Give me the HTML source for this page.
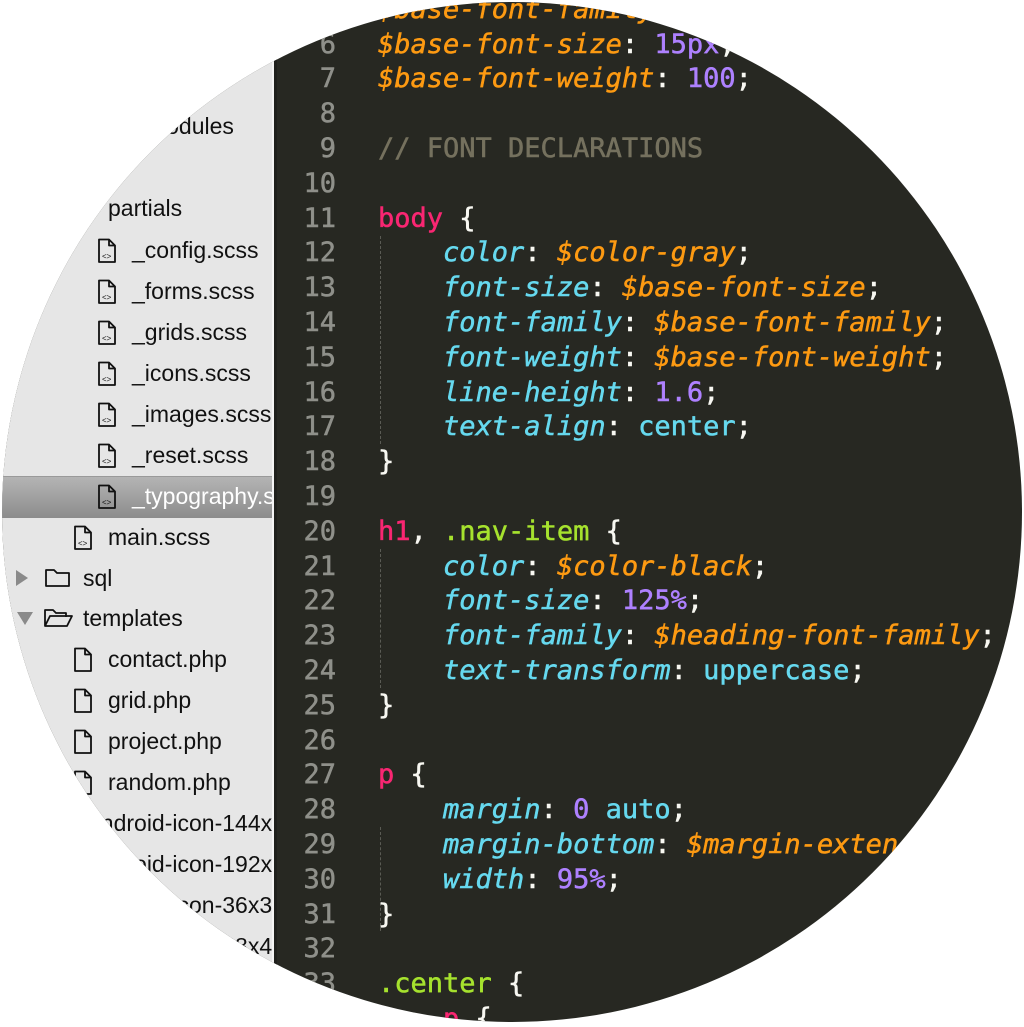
<!DOCTYPE html>
<html><head><meta charset="utf-8">
<style>
html,body{margin:0;padding:0;background:#fff;width:1024px;height:1027px;overflow:hidden}
#c{position:absolute;left:2px;top:2px;width:1020px;height:1020px;border-radius:50%;overflow:hidden;background:#272822}
#side{position:absolute;left:0;top:0;width:270px;height:1020px;background:#e6e6e6;overflow:hidden}
#div{position:absolute;left:270px;top:0;width:2px;height:1020px;background:#f4f4f4}
#div2{position:absolute;left:272px;top:0;width:3px;height:1020px;background:#1f201c}
.it{position:absolute;font-family:"Liberation Sans",sans-serif;font-size:23px;color:#111;white-space:nowrap;line-height:30px}
.sel{position:absolute;left:0;top:474px;width:270px;height:41px;background:linear-gradient(#b4b4b4,#8c8c8c);border-top:1px solid #9a9a9a}
.ic{position:absolute}
#code{position:absolute;left:0;top:-9.2px;font-family:"DejaVu Sans Mono","Liberation Mono",monospace;font-size:27px;line-height:34.8px;white-space:pre;-webkit-text-stroke:0.5px currentColor}
.ln{position:absolute;left:0;width:334px;text-align:right;color:#8f908a}
.tx{position:absolute;left:376px;color:#f8f8f2}
.o{color:#fd9a12;font-style:italic}.p{color:#ae81ff}.k{color:#f92672}.c{color:#66d9ef;font-style:italic}.cv{color:#66d9ef}.g{color:#a6e22e}.cm{color:#75715e}
.guide{position:absolute;left:378px;width:0;border-left:1px dashed #5a5b54;-webkit-text-stroke:0}
</style></head><body>
<div id="c">
<div id="side">
<div class="sel"></div>

<div class="it" style="left:81px;top:109px">node_modules</div>
<div class="it" style="left:106px;top:191px">partials</div>

<svg class="ic" width="30" height="360" style="left:93px;top:233px" viewBox="0 0 30 360">
<defs><g id="f"><path d="M3 1.5h10l6 6v16.5h-16z M13 1.5v6h6" fill="none" stroke="#111" stroke-width="1.8" stroke-linejoin="round"/><text x="6" y="21" font-size="8" font-family="Liberation Sans" fill="#111">&lt;&gt;</text></g></defs>
<use href="#f" x="1" y="3"/><use href="#f" x="1" y="44"/><use href="#f" x="1" y="85"/><use href="#f" x="1" y="126"/><use href="#f" x="1" y="167"/><use href="#f" x="1" y="208"/><use href="#f" x="1" y="249"/>
</svg>
<svg class="ic" width="30" height="30" style="left:69px;top:523px"><use href="#f" x="1" y="0"/></svg>

<div class="it" style="left:130px;top:233px">_config.scss</div>
<div class="it" style="left:130px;top:274px">_forms.scss</div>
<div class="it" style="left:130px;top:315px">_grids.scss</div>
<div class="it" style="left:130px;top:356px">_icons.scss</div>
<div class="it" style="left:130px;top:397px">_images.scss</div>
<div class="it" style="left:130px;top:438px">_reset.scss</div>
<div class="it" style="left:130px;top:479px;color:#fff">_typography.scss</div>
<div class="it" style="left:106px;top:520px">main.scss</div>

<svg class="ic" width="60" height="30" style="left:10px;top:562px"><path d="M4 6l12 8-12 8z" fill="#8a8a8a"/><path d="M34 6h8l3 3h12v13h-23z" fill="none" stroke="#111" stroke-width="1.8" stroke-linejoin="round"/></svg>
<div class="it" style="left:81px;top:561px">sql</div>
<svg class="ic" width="70" height="30" style="left:10px;top:602px"><path d="M5 8h16l-8 13z" fill="#8a8a8a"/><path d="M33 22v-16h8l3 3h10v4 M33 22l5-10h22l-5 10z" fill="none" stroke="#111" stroke-width="1.8" stroke-linejoin="round"/></svg>
<div class="it" style="left:81px;top:601px">templates</div>

<svg class="ic" width="30" height="170" style="left:69px;top:643px" viewBox="0 0 30 170">
<defs><path id="pf" d="M3 1.5h10l6 6v16.5h-16z M13 1.5v6h6" fill="none" stroke="#111" stroke-width="1.8" stroke-linejoin="round"/></defs>
<use href="#pf" x="1" y="2"/><use href="#pf" x="1" y="43"/><use href="#pf" x="1" y="84"/><use href="#pf" x="1" y="125"/>
</svg>
<div class="it" style="left:106px;top:642px">contact.php</div>
<div class="it" style="left:106px;top:683px">grid.php</div>
<div class="it" style="left:106px;top:724px">project.php</div>
<div class="it" style="left:106px;top:765px">random.php</div>
<div class="it" style="left:86px;top:806px">android-icon-144x144.png</div>
<div class="it" style="left:86px;top:847px">android-icon-192x192.png</div>
<div class="it" style="left:86px;top:888px">android-icon-36x36.png</div>
<div class="it" style="left:86px;top:929px">android-icon-48x48.png</div>
</div>
<div id="div"></div><div id="div2"></div>

<div id="code">
<div class="guide" style="top:243px;height:208px"></div>
<div class="guide" style="top:556px;height:139px"></div>
<div class="guide" style="top:834px;height:104px"></div>
<div class="ln" style="top:0">5</div><div class="tx" style="top:0"><span class="o">$base-font-family</span>: <span class="o">$font</span>;</div>
<div class="ln" style="top:34.8px">6</div><div class="tx" style="top:34.8px"><span class="o">$base-font-size</span>: <span class="p">15px</span>;</div>
<div class="ln" style="top:69.6px">7</div><div class="tx" style="top:69.6px"><span class="o">$base-font-weight</span>: <span class="p">100</span>;</div>
<div class="ln" style="top:104.4px">8</div>
<div class="ln" style="top:139.2px">9</div><div class="tx" style="top:139.2px"><span class="cm">// FONT DECLARATIONS</span></div>
<div class="ln" style="top:174px">10</div>
<div class="ln" style="top:208.8px">11</div><div class="tx" style="top:208.8px"><span class="k">body</span> {</div>
<div class="ln" style="top:243.6px">12</div><div class="tx" style="top:243.6px">    <span class="c">color</span>: <span class="o">$color-gray</span>;</div>
<div class="ln" style="top:278.4px">13</div><div class="tx" style="top:278.4px">    <span class="c">font-size</span>: <span class="o">$base-font-size</span>;</div>
<div class="ln" style="top:313.2px">14</div><div class="tx" style="top:313.2px">    <span class="c">font-family</span>: <span class="o">$base-font-family</span>;</div>
<div class="ln" style="top:348px">15</div><div class="tx" style="top:348px">    <span class="c">font-weight</span>: <span class="o">$base-font-weight</span>;</div>
<div class="ln" style="top:382.8px">16</div><div class="tx" style="top:382.8px">    <span class="c">line-height</span>: <span class="p">1.6</span>;</div>
<div class="ln" style="top:417.6px">17</div><div class="tx" style="top:417.6px">    <span class="c">text-align</span>: <span class="cv">center</span>;</div>
<div class="ln" style="top:452.4px">18</div><div class="tx" style="top:452.4px">}</div>
<div class="ln" style="top:487.2px">19</div>
<div class="ln" style="top:522px">20</div><div class="tx" style="top:522px"><span class="k">h1</span>, <span class="g">.nav-item</span> {</div>
<div class="ln" style="top:556.8px">21</div><div class="tx" style="top:556.8px">    <span class="c">color</span>: <span class="o">$color-black</span>;</div>
<div class="ln" style="top:591.6px">22</div><div class="tx" style="top:591.6px">    <span class="c">font-size</span>: <span class="p">125%</span>;</div>
<div class="ln" style="top:626.4px">23</div><div class="tx" style="top:626.4px">    <span class="c">font-family</span>: <span class="o">$heading-font-family</span>;</div>
<div class="ln" style="top:661.2px">24</div><div class="tx" style="top:661.2px">    <span class="c">text-transform</span>: <span class="cv">uppercase</span>;</div>
<div class="ln" style="top:696px">25</div><div class="tx" style="top:696px">}</div>
<div class="ln" style="top:730.8px">26</div>
<div class="ln" style="top:765.6px">27</div><div class="tx" style="top:765.6px"><span class="k">p</span> {</div>
<div class="ln" style="top:800.4px">28</div><div class="tx" style="top:800.4px">    <span class="c">margin</span>: <span class="p">0</span> <span class="cv">auto</span>;</div>
<div class="ln" style="top:835.2px">29</div><div class="tx" style="top:835.2px">    <span class="c">margin-bottom</span>: <span class="o">$margin-extend</span>;</div>
<div class="ln" style="top:870px">30</div><div class="tx" style="top:870px">    <span class="c">width</span>: <span class="p">95%</span>;</div>
<div class="ln" style="top:904.8px">31</div><div class="tx" style="top:904.8px">}</div>
<div class="ln" style="top:939.6px">32</div>
<div class="ln" style="top:974.4px">33</div><div class="tx" style="top:974.4px"><span class="g">.center</span> {</div>
<div class="ln" style="top:1009.2px">34</div><div class="tx" style="top:1009.2px">    <span class="k">p</span> {</div>
</div>
</div>
</body></html>
